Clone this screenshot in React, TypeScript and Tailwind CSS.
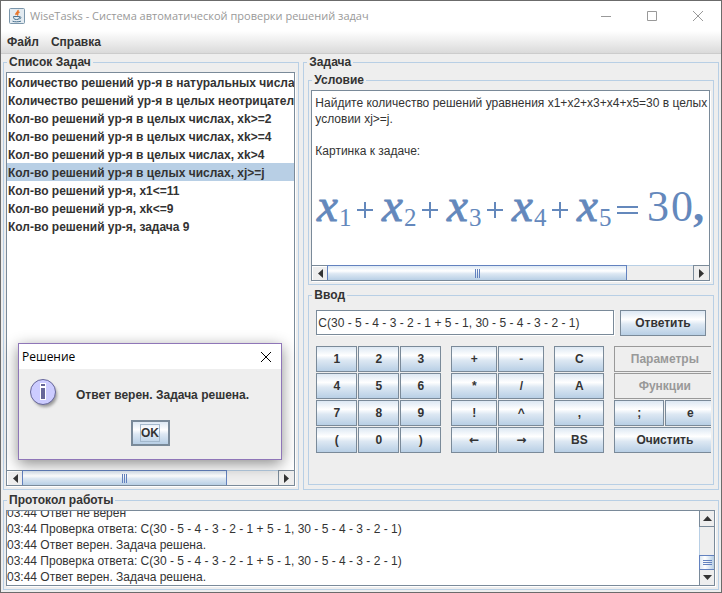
import type { ReactNode } from "react";

const METAL = "bg-[linear-gradient(#dde8f3,#ffffff_35%,#dde8f3_55%,#b8cfe5)]";

const tasks = [
  "Количество решений ур-я в натуральных числах",
  "Количество решений ур-я в целых неотрицатель",
  "Кол-во решений ур-я в целых числах, xk>=2",
  "Кол-во решений ур-я в целых числах, xk>=4",
  "Кол-во решений ур-я в целых числах, xk>4",
  "Кол-во решений ур-я в целых числах, xj>=j",
  "Кол-во решений ур-я, x1<=11",
  "Кол-во решений ур-я, xk<=9",
  "Кол-во решений ур-я, задача 9",
];
const selectedTask = 5;

const log = [
  "03:44 Ответ не верен",
  "03:44 Проверка ответа: C(30 - 5 - 4 - 3 - 2 - 1 + 5 - 1, 30 - 5 - 4 - 3 - 2 - 1)",
  "03:44 Ответ верен. Задача решена.",
  "03:44 Проверка ответа: C(30 - 5 - 4 - 3 - 2 - 1 + 5 - 1, 30 - 5 - 4 - 3 - 2 - 1)",
  "03:44 Ответ верен. Задача решена.",
];

function Panel({ title, className, inner, children }: { title: string; className: string; inner: string; children: ReactNode }) {
  return (
    <fieldset className={`flex min-w-0 flex-col border border-[#b8cfe5] ${className}`}>
      <legend className="ml-[3px] px-[2px] font-bold leading-[15px]">{title}</legend>
      <div className={`flex min-h-0 min-w-0 flex-1 flex-col ${inner}`}>{children}</div>
    </fieldset>
  );
}

function Arrow({ dir }: { dir: "left" | "right" | "up" | "down" }) {
  const d = {
    left: "M5 0v9L0 4.500z",
    right: "M0 0v9l5-4.500z",
    up: "M0 5h9L4.500 0z",
    down: "M0 0h9L4.500 5z",
  }[dir];
  const flat = dir === "up" || dir === "down";
  return (
    <svg width={flat ? 9 : 5} height={flat ? 5 : 9} fill="#333" aria-hidden="true">
      <path d={d} />
    </svg>
  );
}

function HScroll({ thumb }: { thumb: string }) {
  return (
    <div className="flex h-[15px] shrink-0 border-t border-[#7a8a99] bg-[#eee]">
      <button type="button" aria-label="Прокрутить влево" className="flex w-[15px] shrink-0 items-center justify-center border-t border-l border-white">
        <Arrow dir="left" />
      </button>
      <div className="-mt-px min-w-0 flex-1 border-t border-[#b8cfe5]">
        <div className={`-mt-px flex h-[15px] items-center justify-center gap-px border border-b-0 border-[#6382bf] ${METAL} ${thumb}`}>
          <i className="h-[9px] w-px bg-[#6382bf]" />
          <i className="h-[9px] w-px bg-[#6382bf]" />
          <i className="h-[9px] w-px bg-[#6382bf]" />
        </div>
      </div>
      <button type="button" aria-label="Прокрутить вправо" className="flex w-[16px] shrink-0 items-center justify-center border-l border-[#7a8a99]">
        <Arrow dir="right" />
      </button>
    </div>
  );
}

function VScroll() {
  return (
    <div className="flex w-[15px] shrink-0 flex-col border-l border-[#7a8a99] bg-[#eee]">
      <button type="button" aria-label="Прокрутить вверх" className="flex h-[16px] shrink-0 items-center justify-center border-b border-[#7a8a99]">
        <Arrow dir="up" />
      </button>
      <div className="-ml-px flex flex-1 flex-col justify-end border-l border-[#b8cfe5]">
        <div className="-ml-px flex h-[15px] flex-col items-center justify-center gap-px border border-r-0 border-[#6382bf] bg-[linear-gradient(90deg,#dde8f3,#ffffff_35%,#b8cfe5)]">
          <i className="h-px w-[9px] bg-[#6382bf]" />
          <i className="h-px w-[9px] bg-[#6382bf]" />
          <i className="h-px w-[9px] bg-[#6382bf]" />
        </div>
      </div>
      <button type="button" aria-label="Прокрутить вниз" className="flex h-[15px] shrink-0 items-center justify-center">
        <Arrow dir="down" />
      </button>
    </div>
  );
}

function Key({ label, className = "", disabled = false }: { label: string; className?: string; disabled?: boolean }) {
  const arrow = label === "←" || label === "→";
  return (
    <button
      type="button"
      disabled={disabled}
      className={`flex h-[26px] items-center justify-center border font-bold ${arrow ? "font-['DejaVu_Sans',sans-serif]" : ""} ${disabled ? "border-[#999] text-[#999]" : `border-[#7a8a99] ${METAL}`} ${className}`}
    >
      {label}
    </button>
  );
}

function Formula() {
  const terms = [1, 2, 3, 4, 5];
  return (
    <svg width="396" height="70" className="shrink-0" fill="#6488bc" fontFamily="'Liberation Serif', serif" role="img" aria-label="Условие задачи">
      {terms.map((n, i) => (
        <g key={n}>
          <text x={2 + i * 65} y="42" fontSize="47" fontStyle="italic" stroke="#6488bc" strokeWidth=".9">x</text>
          <text x={24 + i * 65} y="47" fontSize="25">{n}</text>
          {n < 5 && <path d={`M${42 + i * 65} 30h16v2h-16zM${49 + i * 65} 23h2v16h-2z`} />}
        </g>
      ))}
      <path d="M302 27h21v2h-21zM302 33h21v2h-21z" />
      <text x="332" y="42" fontSize="44">3</text>
      <text x="356" y="42" fontSize="44">0</text>
      <text x="378" y="42" fontSize="45" fontWeight="bold">,</text>
    </svg>
  );
}

function JavaIcon() {
  return (
    <svg width="16" height="16" viewBox="0 0 16 16" fill="none" aria-hidden="true">
      <rect x=".5" y=".5" width="15" height="15" rx="1" fill="#e3ebf1" stroke="#7b96ab" />
      <path d="M9 2c1 2-3 2.500-2 5M10.500 4c-2 1-2.500 2-1.500 3.500" stroke="#e8762c" strokeWidth="1.500" />
      <path d="M4.500 8.500h6c0 2-.5 3-3 3s-3-1-3-3zM10.500 9c2-.5 2 1.500 0 2M3.500 13.200c2 .8 6 .8 8.500 0" stroke="#4c7390" />
    </svg>
  );
}

function InfoIcon() {
  return (
    <svg width="32" height="32" viewBox="0 2 32 32" aria-hidden="true">
      <defs>
        <filter id="soft" x="-30%" y="-30%" width="160%" height="160%">
          <feGaussianBlur stdDeviation="1.500" />
        </filter>
      </defs>
      <circle cx="17" cy="18" r="12" fill="#999" filter="url(#soft)" />
      <circle cx="15" cy="15" r="12.500" fill="#ccccff" stroke="#666699" />
      <path d="M12 6h6v5h-6zM12 10h6v13h-6z" fill="#fff" />
      <path d="M13 7h4v2h-4zM13 11h4v11h-4z" fill="#666699" />
    </svg>
  );
}

const BOX = "border border-[#7a8a99] bg-white shadow-[1px_1px_0_#fff]";

export default function App() {
  return (
    <div className="relative flex h-screen flex-col border border-[#6b6b6b] bg-[#eee] font-['Liberation_Sans',Arial,sans-serif] text-xs text-[#333]">
      <header className="flex h-[30px] shrink-0 items-center bg-white pl-2 font-['Open_Sans','Noto_Sans',sans-serif] text-[#999]">
        <JavaIcon />
        <h1 className="ml-[5px] flex-1 text-[11px] whitespace-nowrap">WiseTasks - Система автоматической проверки решений задач</h1>
        <div className="flex shrink-0">
          <button type="button" aria-label="Свернуть" className="flex w-[46px] justify-center">
            <svg width="10" height="10" stroke="#999"><path d="M0 5.500h10" /></svg>
          </button>
          <button type="button" aria-label="Развернуть" className="flex w-[46px] justify-center">
            <svg width="10" height="10" fill="none" stroke="#999"><path d="M.5.5h9v9h-9z" /></svg>
          </button>
          <button type="button" aria-label="Закрыть" className="flex w-[46px] justify-center">
            <svg width="10" height="10" stroke="#999"><path d="M0 0l10 10M10 0L0 10" /></svg>
          </button>
        </div>
      </header>
      <nav className="flex h-[23px] shrink-0 items-center gap-3 border-b border-[#ccc] bg-[linear-gradient(#ffffff,#dadada)] pl-[6px] font-bold">
        <button type="button">Файл</button>
        <button type="button">Справка</button>
      </nav>

      <div className="flex min-h-0 flex-1 flex-col gap-[3px] px-[2px] pt-px pb-[2px]">
        <main className="flex min-h-0 flex-1 gap-1">
          <Panel title="Список Задач" className="flex-[296]" inner="pt-[2px] pr-[3px] pb-[3px] pl-[2px]">
            <div className={`flex min-h-0 flex-1 flex-col ${BOX}`}>
              <ul className="min-h-0 flex-1 overflow-hidden">
                {tasks.map((task, i) => (
                  <li key={task} className={i === selectedTask ? "bg-[#b8cfe5]" : ""}>
                    <button type="button" className="block h-[18px] pt-px pl-px text-left font-bold whitespace-nowrap">{task}</button>
                  </li>
                ))}
              </ul>
              <HScroll thumb="w-[80%]" />
            </div>
          </Panel>

          <Panel title="Задача" className="flex-[416]" inner="gap-[3px] px-1 pt-[3px] pb-1">
            <Panel title="Условие" className="min-h-0 flex-1" inner="pt-[2px] pr-[3px] pb-[3px] pl-[2px]">
              <div className={`flex min-h-0 flex-1 flex-col ${BOX}`}>
                <div className="min-h-0 flex-1 overflow-hidden px-[3px] pt-1 leading-4 whitespace-nowrap">
                  <p>Найдите количество решений уравнения x1+x2+x3+x4+x5=30 в целых</p>
                  <p>условии xj&gt;=j.</p>
                  <p className="mt-4 mb-[20px]">Картинка к задаче:</p>
                  <Formula />
                </div>
                <HScroll thumb="w-[82%]" />
              </div>
            </Panel>

            <Panel title="Ввод" className="shrink-0" inner="gap-[10px] pt-[7px] pr-[2px] pb-[31px] pl-[7px]">
              <form className="flex gap-[6px] pr-[5px]" onSubmit={(e) => e.preventDefault()}>
                <input
                  aria-label="Ввод"
                  defaultValue="C(30 - 5 - 4 - 3 - 2 - 1 + 5 - 1, 30 - 5 - 4 - 3 - 2 - 1)"
                  className={`h-[25px] min-w-0 flex-1 px-px outline-none ${BOX}`}
                />
                <Key label="Ответить" className="w-[86px] shrink-0" />
              </form>
              <div className="flex gap-[10px] overflow-hidden">
                <div className="grid shrink-0 grid-cols-[repeat(3,41px)] gap-px">
                  {["1", "2", "3", "4", "5", "6", "7", "8", "9", "(", "0", ")"].map((k) => <Key key={k} label={k} />)}
                </div>
                <div className="grid shrink-0 grid-cols-[repeat(2,46px)] gap-px">
                  {["+", "-", "*", "/", "!", "^", "←", "→"].map((k) => <Key key={k} label={k} />)}
                </div>
                <div className="grid shrink-0 grid-cols-[50px] gap-px">
                  {["C", "A", ",", "BS"].map((k) => <Key key={k} label={k} />)}
                </div>
                <div className="grid shrink-0 grid-cols-[50px_50px] gap-px">
                  <Key label="Параметры" className="col-span-2" disabled />
                  <Key label="Функции" className="col-span-2" disabled />
                  <Key label=";" />
                  <Key label="e" />
                  <Key label="Очистить" className="col-span-2" />
                </div>
              </div>
            </Panel>
          </Panel>
        </main>

        <Panel title="Протокол работы" className="shrink-0" inner="pt-[2px] pr-[3px] pb-[3px] pl-[2px]">
          <div className={`flex h-[76px] ${BOX}`}>
            <div className="flex min-w-0 flex-1 flex-col justify-end overflow-hidden leading-4 whitespace-nowrap">
              {log.map((line, i) => <p key={i} className="shrink-0">{line}</p>)}
            </div>
            <VScroll />
          </div>
        </Panel>
      </div>

      <div role="dialog" aria-labelledby="dialog-title" className="absolute top-[342px] left-[17px] w-[264px] border border-[#8f76b8] bg-[#eee] shadow-[0_4px_14px_rgba(0,0,0,0.45)]">
        <div className="flex h-[25px] items-center justify-between bg-white pr-[10px] pl-[3px] font-['Open_Sans','Noto_Sans',sans-serif] text-black">
          <h2 id="dialog-title">Решение</h2>
          <button type="button" aria-label="Закрыть окно">
            <svg width="10" height="10" stroke="#000"><path d="M0 0l10 10M10 0L0 10" /></svg>
          </button>
        </div>
        <div className="flex flex-col items-center gap-[9px] pt-[10px] pb-[13px]">
          <div className="flex w-full items-center gap-4 pl-[9px]">
            <InfoIcon />
            <p className="font-bold">Ответ верен. Задача решена.</p>
          </div>
          <button type="button" className={`flex h-[26px] w-[39px] items-center justify-center border-2 border-[#7a8a99] font-bold ${METAL}`}>
            <span className="border border-[#a3b8cc]">OK</span>
          </button>
        </div>
      </div>
    </div>
  );
}
